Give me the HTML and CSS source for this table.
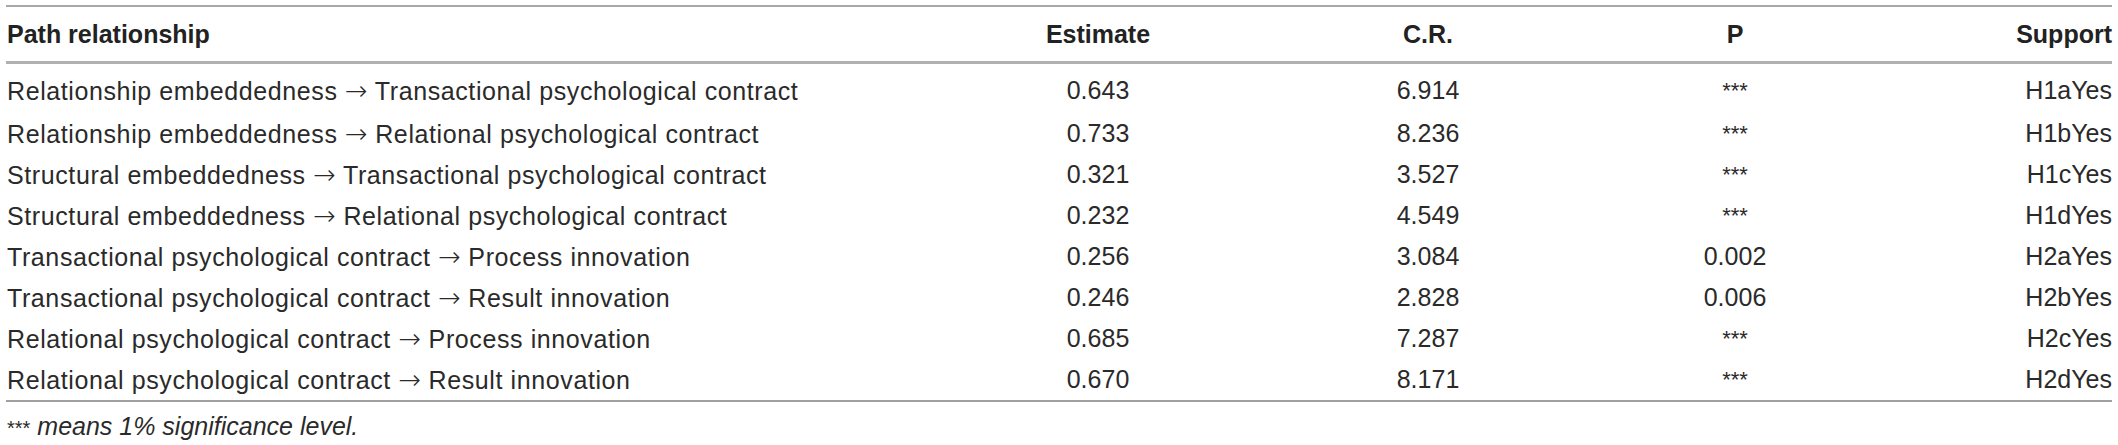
FILE: index.html
```html
<!DOCTYPE html>
<html lang="en">
<head>
<meta charset="utf-8">
<title>Path relationship table</title>
<link rel="stylesheet" href="styles.css">
</head>
<body>
<div class="wrap">
  <table class="results">
    <colgroup>
      <col class="c-path">
      <col class="c-est">
      <col class="c-cr">
      <col class="c-p">
      <col class="c-sup">
    </colgroup>
    <thead>
      <tr>
        <th class="left">Path relationship</th>
        <th>Estimate</th>
        <th>C.R.</th>
        <th>P</th>
        <th class="right">Support</th>
      </tr>
    </thead>
    <tbody>
      <tr><td class="left path">Relationship embeddedness <span class="arr">→</span> Transactional psychological contract</td><td>0.643</td><td>6.914</td><td class="ast">***</td><td class="right">H1aYes</td></tr>
      <tr><td class="left path">Relationship embeddedness <span class="arr">→</span> Relational psychological contract</td><td>0.733</td><td>8.236</td><td class="ast">***</td><td class="right">H1bYes</td></tr>
      <tr><td class="left path">Structural embeddedness <span class="arr">→</span> Transactional psychological contract</td><td>0.321</td><td>3.527</td><td class="ast">***</td><td class="right">H1cYes</td></tr>
      <tr><td class="left path">Structural embeddedness <span class="arr">→</span> Relational psychological contract</td><td>0.232</td><td>4.549</td><td class="ast">***</td><td class="right">H1dYes</td></tr>
      <tr><td class="left path">Transactional psychological contract <span class="arr">→</span> Process innovation</td><td>0.256</td><td>3.084</td><td>0.002</td><td class="right">H2aYes</td></tr>
      <tr><td class="left path">Transactional psychological contract <span class="arr">→</span> Result innovation</td><td>0.246</td><td>2.828</td><td>0.006</td><td class="right">H2bYes</td></tr>
      <tr><td class="left path">Relational psychological contract <span class="arr">→</span> Process innovation</td><td>0.685</td><td>7.287</td><td class="ast">***</td><td class="right">H2cYes</td></tr>
      <tr><td class="left path">Relational psychological contract <span class="arr">→</span> Result innovation</td><td>0.670</td><td>8.171</td><td class="ast">***</td><td class="right">H2dYes</td></tr>
    </tbody>
  </table>
  <p class="note"><span class="stars">***</span> <em>means 1% significance level.</em></p>
</div>
</body>
</html>
```

FILE: styles.css
```css
html, body {
  margin: 0;
  padding: 0;
  background: #ffffff;
}

body {
  font-family: "Liberation Sans", Arial, sans-serif;
  color: #2a2a2a;
}

.wrap {
  padding: 5px 6px 0 6px;
}

.results {
  width: 2106px;
  border-collapse: collapse;
  table-layout: fixed;
  font-size: 25px;
}

.c-path { width: 929px; }
.c-est { width: 326px; }
.c-cr { width: 334px; }
.c-p { width: 280px; }
.c-sup { width: 237px; }

.results thead tr {
  border-top: 2px solid #a8a8a8;
  border-bottom: 3px solid #b0b0b0;
}

.results th {
  height: 54px;
  padding: 0;
  font-weight: bold;
  color: #222;
  text-align: center;
  vertical-align: middle;
}

.results td {
  height: 41px;
  padding: 0;
  text-align: center;
  vertical-align: middle;
  font-weight: normal;
}

.results tbody tr:first-child td {
  height: 45px;
  padding-top: 4px;
}

.results tbody tr:last-child {
  border-bottom: 2px solid #a0a0a0;
}

.results .left {
  text-align: left;
  padding-left: 1px;
}

.results .path {
  letter-spacing: 0.6px;
}

.results .arr {
  font-family: "DejaVu Sans", sans-serif;
  font-size: 27px;
  font-weight: 200;
  letter-spacing: 0;
}

.results .right {
  text-align: right;
}

.results .ast {
  font-size: 22px;
}

.note {
  margin: 9px 0 0 1px;
  font-size: 25px;
  line-height: 30px;
}

.note .stars {
  font-size: 20px;
}
```
